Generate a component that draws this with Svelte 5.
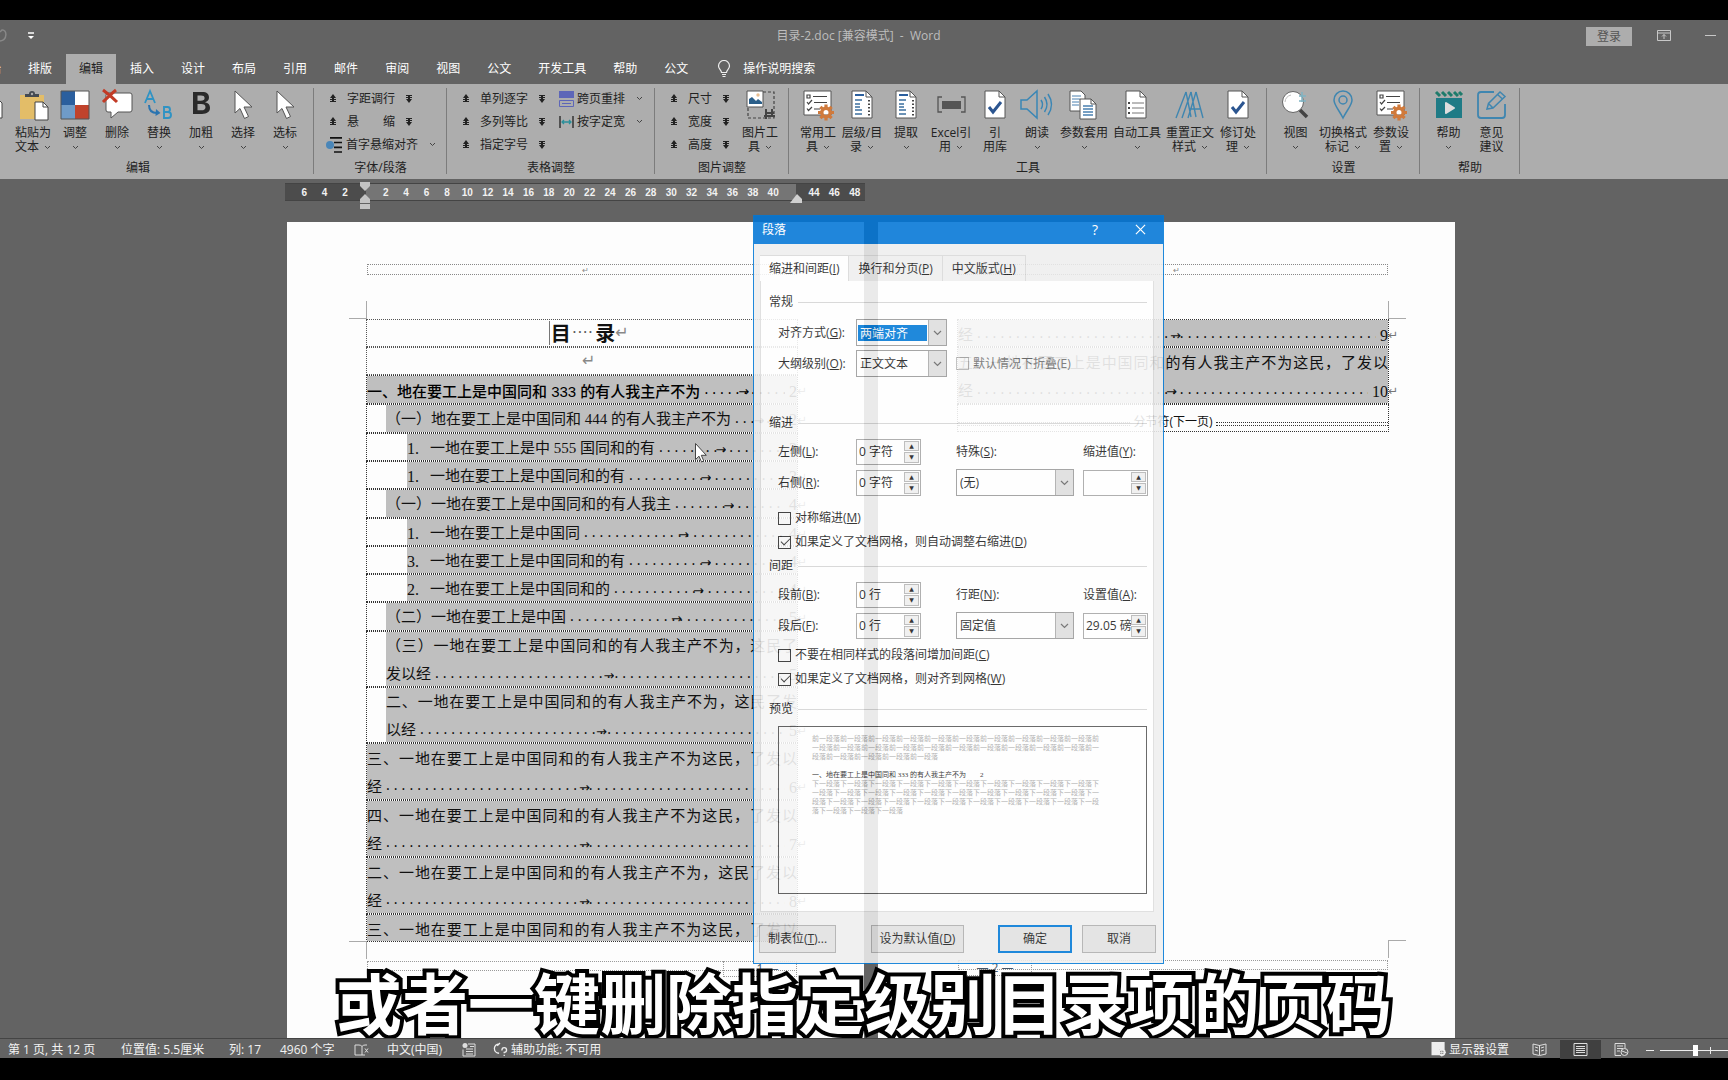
<script>
  const tabs = ['开始', '排版', '编辑', '插入', '设计', '布局', '引用', '邮件', '审阅', '视图', '公文', '开发工具', '帮助', '公文'];
  const activeTab = 2;

  const editTools = [
    { icon: 'lines', a: '', b: '', w: 42 },
    { icon: 'paste', a: '粘贴为', b: '文本', w: 42, more: true },
    { icon: 'tiles', a: '调整', b: '', w: 42, more: true },
    { icon: 'remove', a: '删除', b: '', w: 42, more: true },
    { icon: 'replace', a: '替换', b: '', w: 42, more: true },
    { icon: 'bold', a: '加粗', b: '', w: 42, more: true },
    { icon: 'pointer', a: '选择', b: '', w: 42, more: true },
    { icon: 'pointer', a: '选标', b: '', w: 42, more: true }
  ];
  const mainTools = [
    { icon: 'listgear', a: '常用工', b: '具', w: 44, more: true },
    { icon: 'doc', a: '层级/目', b: '录', w: 44, more: true },
    { icon: 'doc', a: '提取', b: '', w: 44, more: true },
    { icon: 'field', a: 'Excel引', b: '用', w: 46, more: true },
    { icon: 'check', a: '引', b: '用库', w: 42 },
    { icon: 'sound', a: '朗读', b: '', w: 42, more: true },
    { icon: 'docs', a: '参数套用', b: '', w: 52, more: true },
    { icon: 'bullets', a: '自动工具', b: '', w: 54, more: true },
    { icon: 'styles', a: '重置正文', b: '样式', w: 52, more: true },
    { icon: 'check', a: '修订处', b: '理', w: 44, more: true }
  ];
  const setTools = [
    { icon: 'zoom', a: '视图', b: '', w: 43, more: true },
    { icon: 'pin', a: '切换格式', b: '标记', w: 52, more: true },
    { icon: 'listgear', a: '参数设', b: '置', w: 44, more: true }
  ];
  const helpTools = [
    { icon: 'video', a: '帮助', b: '', w: 43, more: true },
    { icon: 'write', a: '意见', b: '建议', w: 43 }
  ];
  const imageTools = [{ icon: 'crop', a: '图片工', b: '具', w: 44, more: true }];

  const ruler = ['6', '4', '2', ''].concat(
    Array.from({ length: 24 }, (_, i) => (i === 20 ? '' : String((i + 1) * 2)))
  );

  const rows = [
    { lv: 1, head: true, text: '一、地在要工上是中国同和 333 的有人我主产不为', page: '2' },
    { lv: 2, text: '（一）地在要工上是中国同和 444 的有人我主产不为', page: '2' },
    { lv: 3, no: '1.', text: '一地在要工上是中 555 国同和的有', page: '3' },
    { lv: 3, no: '1.', text: '一地在要工上是中国同和的有', page: '3' },
    { lv: 2, text: '（一）一地在要工上是中国同和的有人我主', page: '4' },
    { lv: 3, no: '1.', text: '一地在要工上是中国同', page: '4' },
    { lv: 3, no: '3.', text: '一地在要工上是中国同和的有', page: '4' },
    { lv: 3, no: '2.', text: '一地在要工上是中国同和的', page: '4' },
    { lv: 2, text: '（二）一地在要工上是中国', page: '5' },
    { lv: 2, first: '（三）一地在要工上是中国同和的有人我主产不为，这民了', text: '发以经', page: '5' },
    { lv: 2, first: '二、一地在要工上是中国同和的有人我主产不为，这民了发', text: '以经', page: '5' },
    { lv: 1, first: '三、一地在要工上是中国同和的有人我主产不为这民，了发以', text: '经', page: '6' },
    { lv: 1, first: '四、一地在要工上是中国同和的有人我主产不为这民，了发以', text: '经', page: '7' },
    { lv: 1, first: '二、一地在要工上是中国同和的有人我主产不为，这民了发以', text: '经', page: '8' },
    { lv: 1, first: '三、一地在要工上是中国同和的有人我主产不为这民，了发以' }
  ];
  const rows2 = [
    { lv: 1, text: '经', page: '9' },
    { lv: 1, first: '五、一地在要工上是中国同和的有人我主产不为这民，了发以', text: '经', page: '10' }
  ];
  const dots = '.'.repeat(70);
  const before = '前一段落'.repeat(25);
  const after = '下一段落'.repeat(34);
</script>

{#snippet chevron()}
  <svg class="chev" viewBox="0 0 7 5" aria-hidden="true"><path d="M1 1l2.500 2.500L6 1" fill="none" stroke="#444" /></svg>
{/snippet}

{#snippet up()}
  <svg class="nudge" viewBox="0 0 8 9" aria-hidden="true"><path d="M4 0l3 4H5v1h2v1H5v1h2v1H1V7h2V6H1V5h2V4H1z" fill="#222" /></svg>
{/snippet}

{#snippet down()}
  <svg class="nudge" viewBox="0 0 8 9" aria-hidden="true"><path d="M4 9l3-4H5V4h2V3H5V2h2V1H1v1h2v1H1v1h2v1H1z" fill="#222" /></svg>
{/snippet}

{#snippet gear()}
  <g transform="translate(23 22.500)">
    <circle r="4.200" fill="none" stroke="#d07a3c" stroke-width="3.400" />
    <path d="M0-8v3M0 5v3M-8 0h3M5 0h3M-5.600-5.600l2 2M3.600 3.600l2 2M-5.600 5.600l2-2M3.600-3.600l2-2" stroke="#d07a3c" stroke-width="3.200" />
  </g>
{/snippet}

{#snippet icon(name)}
  <svg class="big" viewBox="0 0 30 30" aria-hidden="true">
    {#if name === 'lines'}
      <path d="M6 8h15l5 5v15H6z" fill="#fff" stroke="#444" /><path d="M10 13h12M10 17h12M10 21h12M10 25h12" stroke="#444" stroke-width="1.500" />
    {:else if name === 'paste'}
      <path d="M2 5h24v24H2z" fill="#e3bd68" /><path d="M7 7V4h4a3 3 0 0 1 6 0h4v3z" fill="#444a52" /><circle cx="14" cy="4" r="1.200" fill="#aaa" />
      <path d="M17 12h8l5 5v13H17z" fill="#fff" stroke="#444" /><path d="M25 12v5h5" fill="none" stroke="#444" />
    {:else if name === 'tiles'}
      <path d="M1 1h28v28H1z" fill="#fff" /><path d="M1 1h14v14H1z" fill="#2b5f9e" /><path d="M1 15h14v14H1z" fill="#6f9bc8" /><path d="M15 15h14v14H15z" fill="#c0432c" />
      <path d="M1 1h28v28H1z" fill="none" stroke="#555" />
    {:else if name === 'remove'}
      <path d="M5 3h23a2 2 0 0 1 2 2v15a2 2 0 0 1-2 2H16l-7 6v-6H6a2 2 0 0 1-2-2V5z" fill="#fff" stroke="#555" />
      <path d="M1 0c4 3 10 8 14 12M14 0C9 4 5 8 1 12" stroke="#c23b26" stroke-width="3" fill="none" />
    {:else if name === 'replace'}
      <path d="M1 13L6 1l5 12M3 9h6" fill="none" stroke="#2f93c4" stroke-width="1.800" />
      <path d="M20 17v11h4a3 3 0 0 0 0-6h-4 3.500a2.500 2.500 0 0 0 0-5z" fill="none" stroke="#2f93c4" stroke-width="1.900" />
      <path d="M5 15c0 5 3 8 8 8" fill="none" stroke="#2b74b0" stroke-width="2" /><path d="M12 19l4.500 4-5 3z" fill="#2b74b0" />
    {:else if name === 'bold'}
      <path d="M7 2h9c5 0 7 2 7 5.500 0 2.500-1.500 4-4 4.800 3.200.6 5 2.500 5 5.500 0 4-3 6.200-8 6.200H7zM11.500 5.500v5.300h3.300c2.600 0 3.800-.9 3.800-2.700s-1.200-2.600-3.600-2.600zm0 8.600v6.200h3.800c2.800 0 4.200-1 4.200-3.100s-1.400-3.100-4.400-3.100z" fill="#2a2a2a" fill-rule="evenodd" />
    {:else if name === 'pointer'}
      <path d="M7 1v22l5-4.500 4.500 10 4-2-4.500-9.500h8z" fill="#fff" stroke="#555" />
    {:else if name === 'crop'}
      <path d="M3 2h26v26H3z" fill="none" stroke="#444" stroke-width="1.200" stroke-dasharray="3 2" /><path d="M2 1h16v16H2z" fill="#fff" stroke="#555" />
      <path d="M4 14V9l3-2 4 4 2-2 4 3v2z" fill="#2b5f8a" /><circle cx="13" cy="5" r="1.700" fill="#e8bd90" />
      <path d="M20 28h1v-5h8M19 26h8v-7M27 26h3M21 23v-4" stroke="#444" stroke-width="2" fill="none" />
    {:else if name === 'listgear'}
      <path d="M1 1h27v24H1z" fill="#fff" stroke="#555" /><path d="M4 5h3v3H4zM10 6.500h14M11 12.500h13M11 19h6M4 12l1.500 2L9 10M4 18.500L5.500 20.500 9 17" fill="none" stroke="#444" stroke-width="1.200" />
      {@render gear()}
    {:else if name === 'doc'}
      <path d="M5 1h14l6 6v21H5z" fill="#fff" stroke="#555" /><path d="M19 1v6h6" fill="none" stroke="#555" />
      <path d="M8 5h9" stroke="#2b5f9e" stroke-width="2" /><path d="M8 10h7M8 14h5M8 17h5M8 20h7M8 24h7" stroke="#3b6f9e" stroke-width="1.400" /><path d="M22 10v16" stroke="#444" stroke-width="2" stroke-dasharray="1.500 2" />
    {:else if name === 'field'}
      <path d="M6 7H2v15h4M25 7h4v15h-4" fill="none" stroke="#555" stroke-width="1.300" /><path d="M6 11h19v8H6z" fill="#555" />
    {:else if name === 'check'}
      <path d="M5 1h14l6 6v21H5z" fill="#fff" stroke="#555" /><path d="M19 1v6h6" fill="none" stroke="#555" /><path d="M9 17l4 5 8-10" fill="none" stroke="#2b5590" stroke-width="3" />
    {:else if name === 'sound'}
      <path d="M-1 10h6L15 1v27L5 19h-6z" fill="none" stroke="#3a86b5" stroke-width="1.500" /><path d="M19 10q3 4.500 0 9M22.500 7q5 7.500 0 15M26 4q7 10.500 0 21" fill="none" stroke="#3a86b5" stroke-width="1.500" />
    {:else if name === 'docs'}
      <path d="M1 1h11l4 4v16H1z" fill="#fff" stroke="#555" /><path d="M3 6h9M3 9h8M3 12h7M3 15h7" stroke="#4a80b0" />
      <path d="M11 9h11l5 5v15H11z" fill="#fff" stroke="#555" /><path d="M22 9v5h5" fill="none" stroke="#555" /><path d="M14 16h10M14 19h10M14 22h10M14 25h10" stroke="#4a80b0" stroke-width="1.300" />
    {:else if name === 'bullets'}
      <path d="M4 1h14l6 6v21H4z" fill="#fff" stroke="#555" /><path d="M18 1v6h6" fill="none" stroke="#555" /><path d="M10 13h12M10 18h12M10 23h12" stroke="#777" /><path d="M7 12v2M7 17v2M7 22v2" stroke="#444" stroke-width="2" />
    {:else if name === 'styles'}
      <path d="M1 28L11 2M7 28L16 2M13 28L21 2M11 2l5 25M16 2l5 25M21 2l7 26M14 19h11" fill="none" stroke="#3f86b0" stroke-width="1.400" />
    {:else if name === 'zoom'}
      <circle cx="12" cy="12" r="10.500" fill="#fff" stroke="#666" /><path d="M4 12a8 8 0 0 1 6-7" stroke="#bbb" fill="none" /><path d="M19 20l7 7" stroke="#444" stroke-width="3.500" /><path d="M18 6h7M18 11h7M21 2v10" stroke="#7fb4c4" stroke-width="1.500" />
    {:else if name === 'pin'}
      <path d="M15 28C11 20 6 15 6 10a9 9 0 0 1 18 0c0 5-5 10-9 18z" fill="none" stroke="#3f86b0" stroke-width="1.500" /><circle cx="15" cy="10" r="4" fill="none" stroke="#3f86b0" stroke-width="1.500" />
    {:else if name === 'video'}
      <path d="M2 8h26v20H2z" fill="#1f7b86" /><path d="M2 2l4 4M8 2l4 4M14 2l4 4M20 2l4 4M25 2l3 3" stroke="#1f7b6b" stroke-width="3" /><path d="M12 13l8 5-8 5z" fill="#ddd" stroke="#ddd" stroke-width="2" stroke-linejoin="round" />
    {:else if name === 'write'}
      <path d="M17 2H4a3 3 0 0 0-3 3v20a3 3 0 0 0 3 3h21a3 3 0 0 0 3-3V14" fill="none" stroke="#3f86b0" stroke-width="1.800" /><path d="M10 19l1.500-5.500L23 2l5 4.500-12 11.500zM20.500 4.500l5 4.500M11.500 13.500l4.500 4.500" fill="none" stroke="#3f86b0" stroke-width="1.500" />
    {/if}
  </svg>
{/snippet}

{#snippet tools(list)}
  <div class="tools">
    {#each list as t}
      <button class="tool" style:width="{t.w}px">
        {@render icon(t.icon)}
        <span class="cap">{t.a}</span>
        <span class="cap">{t.b}{#if t.more}{@render chevron()}{/if}</span>
      </button>
    {/each}
  </div>
{/snippet}

{#snippet tocRow(r)}
  <div class={['para', `lv${r.lv}`, r.head && 'head', r.first && r.text && 'double']}>
    <div class="sel">
      {#if r.first}<div class="line full">{r.first}</div>{/if}
      {#if r.text}
        <div class="line">
          {#if r.no}<span class="no">{r.no}</span>{/if}
          <span>{r.text}</span>
          <span class="leader"><span class="dots">{dots}</span><span class="tab">→</span></span>
          <span class="num">{r.page}</span><span class="ret">↵</span>
        </div>
      {/if}
    </div>
  </div>
{/snippet}

{#snippet spin(id, value)}
  <span class="spin">
    <input {id} type="text" {value} />
    <span class="steps"><button aria-label="增加">▲</button><button aria-label="减少">▼</button></span>
  </span>
{/snippet}

{#snippet combo(id, value, lit)}
  <span class="combo" class:lit>
    <select {id}><option>{value}</option></select>
    <span class="drop"><svg viewBox="0 0 9 6" aria-hidden="true"><path d="M1 1l3.500 3.500L8 1" fill="none" stroke="#666" stroke-width="1.200" /></svg></span>
  </span>
{/snippet}

<div class="app">
  <header class="title">
    <div class="side">
      <svg class="undo" viewBox="0 0 8 16" aria-hidden="true"><path d="M0 13c8-1 7-12 2-11L0 4" fill="none" stroke="#888" stroke-width="1.500" /></svg>
      <svg class="more" viewBox="0 0 8 8" aria-hidden="true"><path d="M1 1h6" stroke="#fff" stroke-width="1.500" /><path d="M1 4h6L4 7z" fill="#fff" /></svg>
    </div>
    <h1>目录-2.doc [兼容模式]&nbsp; -&nbsp; Word</h1>
    <div class="side end">
      <button class="login">登录</button>
      <svg class="win" viewBox="0 0 14 12" aria-hidden="true"><path d="M.5.5h13v10H.5zM.5 3h13M7 9V4.500M5 6.500l2-2 2 2" fill="none" stroke="#c8c8c8" /></svg>
      <svg class="min" viewBox="0 0 12 12" aria-hidden="true"><path d="M0 5.500h11" stroke="#c8c8c8" /></svg>
    </div>
  </header>

  <nav class="tabs">
    {#each tabs as t, i}
      <button class:on={i === activeTab}>{t}</button>
    {/each}
    <label class="tell">
      <svg viewBox="0 0 14 18" aria-hidden="true"><path d="M4.500 12.500C4.500 10 1.500 9 1.500 6a5.500 5.500 0 0 1 11 0c0 3-3 4-3 6.500zM5 14.500h4M5.500 16.500h3" fill="none" stroke="#eee" stroke-width="1.200" /></svg>
      <input type="text" placeholder="操作说明搜索" />
    </label>
  </nav>

  <div class="ribbon">
    <section class="group first">{@render tools(editTools)}<h2>编辑</h2></section>
    <section class="group g2">
      <div class="stack">
        <div class="nrow"><button aria-label="减小字距">{@render up()}</button><span class="w48">字距调行</span><button aria-label="增大字距">{@render down()}</button></div>
        <div class="nrow"><button aria-label="减小悬缩">{@render up()}</button><span class="w48 apart"><i>悬</i><i>缩</i></span><button aria-label="增大悬缩">{@render down()}</button></div>
        <button class="irow hang">
          <svg viewBox="0 0 18 16" aria-hidden="true"><circle cx="5" cy="8" r="4" fill="#4a86b8" /><path d="M5 .8h12M9 5.500h8M9 10.300h8M9 15h8" stroke="#111" stroke-width="1.700" /></svg>
          <span>首字悬缩对齐</span>{@render chevron()}
        </button>
      </div>
      <h2>字体/段落</h2>
    </section>
    <section class="group g3">
      <div class="pair">
        <div class="stack">
          {#each ['单列逐字', '多列等比', '指定字号'] as t}
            <div class="nrow"><button aria-label="减小{t}">{@render up()}</button><span class="w48">{t}</span><button aria-label="增大{t}">{@render down()}</button></div>
          {/each}
        </div>
        <div class="stack">
          <button class="irow">
            <svg viewBox="0 0 15 16" aria-hidden="true"><path d="M0 0h15v7H0z" fill="#5d66b8" /><path d="M.5 9.500h14v6H.5zM3 12.500h9" fill="none" stroke="#5d66b8" /></svg>
            <span>跨页重排</span>{@render chevron()}
          </button>
          <button class="irow">
            <svg viewBox="0 0 15 16" aria-hidden="true"><path d="M1 2v12M14 2v12" stroke="#333" stroke-width="1.500" /><path d="M3 8h9M5 6L3 8l2 2M10 6l2 2-2 2" fill="none" stroke="#2a8f9a" stroke-width="1.300" /></svg>
            <span>按字定宽</span>{@render chevron()}
          </button>
        </div>
      </div>
      <h2>表格调整</h2>
    </section>
    <section class="group g4">
      <div class="pair">
        <div class="stack">
          {#each ['尺寸', '宽度', '高度'] as t}
            <div class="nrow"><button aria-label="减小{t}">{@render up()}</button><span class="w24">{t}</span><button aria-label="增大{t}">{@render down()}</button></div>
          {/each}
        </div>
        {@render tools(imageTools)}
      </div>
      <h2>图片调整</h2>
    </section>
    <section class="group">{@render tools(mainTools)}<h2>工具</h2></section>
    <section class="group">{@render tools(setTools)}<h2>设置</h2></section>
    <section class="group">{@render tools(helpTools)}<h2>帮助</h2></section>
  </div>

  <main class="work">
    <div class="canvas">
      <div class="ruler">
        {#each ruler as n}<span>{n}</span>{/each}
        <svg class="mark left" viewBox="0 0 10 27" aria-hidden="true"><path d="M0 0h10v4L5 9 0 4zM5 12l5 5v4H0v-4zM0 22h10v5H0z" fill="#c4c4c4" /></svg>
        <svg class="mark right" viewBox="0 0 12 9" aria-hidden="true"><path d="M7 0l5 5v4H0z" fill="#d0d0d0" /></svg>
      </div>

      <div class="pages">
        <article class="page">
          <div class="hf"><span>↵</span></div>
          <div class="text">
            <div class="para name"><b class="mk">目</b><span class="sp">····</span><b>录</b><span class="ret2">↵</span></div>
            <div class="para name"><span class="ret2">↵</span></div>
            {#each rows as r}{@render tocRow(r)}{/each}
          </div>
          <div class="foot right"><span>— 1 —</span></div>
        </article>
        <article class="page second">
          <div class="hf"><span>↵</span></div>
          <div class="text tall">
            {#each rows2 as r}{@render tocRow(r)}{/each}
            <div class="para break"><span></span><b>分节符(下一页)</b><span></span></div>
          </div>
          <div class="foot"><span>— 2 —</span></div>
        </article>
      </div>

      <svg class="cursor" viewBox="0 0 12 20" aria-hidden="true"><path d="M.5.5v16l3.500-3.300 2.500 5.800 2.300-1L6.300 12.300h5z" fill="#fff" stroke="#444" /></svg>

      <form class="dialog" onsubmit={(e) => e.preventDefault()}>
        <div class="dtitle"><span>段落</span><button type="button">?</button><button type="button" aria-label="关闭"><svg viewBox="0 0 12 12"><path d="M1 1l10 10M11 1L1 11" stroke="#fff" stroke-width="1.300" /></svg></button></div>
        <div class="dtabs">
          <button type="button" class="on">缩进和间距(<u>I</u>)</button>
          <button type="button">换行和分页(<u>P</u>)</button>
          <button type="button">中文版式(<u>H</u>)</button>
        </div>
        <div class="panel">
          <h3>常规</h3>
          <div class="grid top">
            <label for="al">对齐方式(<u>G</u>):</label>{@render combo('al', '两端对齐', true)}<i></i><i></i>
            <label for="ol">大纲级别(<u>O</u>):</label>{@render combo('ol', '正文文本', false)}
            <label class="tick off wide"><input type="checkbox" disabled />默认情况下折叠(E)</label>
          </div>
          <h3 class="gap">缩进</h3>
          <div class="grid">
            <label for="il">左侧(<u>L</u>):</label>{@render spin('il', '0 字符')}<label for="sp">特殊(<u>S</u>):</label><label for="iv">缩进值(<u>Y</u>):</label>
            <label for="ir">右侧(<u>R</u>):</label>{@render spin('ir', '0 字符')}{@render combo('sp', '(无)', false)}{@render spin('iv', '')}
          </div>
          <div class="ticks spaced">
            <label class="tick"><input type="checkbox" /><span>对称缩进(<u>M</u>)</span></label>
            <label class="tick"><input type="checkbox" checked /><span>如果定义了文档网格，则自动调整右缩进(<u>D</u>)</span></label>
          </div>
          <h3>间距</h3>
          <div class="grid">
            <label for="sb">段前(<u>B</u>):</label>{@render spin('sb', '0 行')}<label for="ls">行距(<u>N</u>):</label><label for="lv">设置值(<u>A</u>):</label>
            <label for="sa">段后(<u>F</u>):</label>{@render spin('sa', '0 行')}{@render combo('ls', '固定值', false)}{@render spin('lv', '29.05 磅')}
          </div>
          <div class="ticks">
            <label class="tick"><input type="checkbox" /><span>不要在相同样式的段落间增加间距(<u>C</u>)</span></label>
            <label class="tick"><input type="checkbox" checked /><span>如果定义了文档网格，则对齐到网格(<u>W</u>)</span></label>
          </div>
          <h3 class="low">预览</h3>
          <div class="preview">
            <p>{before}</p>
            <p class="mid">一、地在要工上是中国同和 333 的有人我主产不为<span>2</span></p>
            <p>{after}</p>
          </div>
        </div>
        <div class="buttons">
          <button type="button" class="b1">制表位(<u>T</u>)...</button>
          <button type="button" class="b2">设为默认值(<u>D</u>)</button>
          <button type="submit" class="b3">确定</button>
          <button type="button" class="b3">取消</button>
        </div>
      </form>
    </div>
    <p class="caption">或者一键删除指定级别目录项的页码</p>
  </main>

  <footer class="status">
    <span class="s1">第 1 页, 共 12 页</span>
    <span class="s2">位置值: 5.5厘米</span>
    <span class="s3">列: 17</span>
    <span class="s4">4960 个字</span>
    <svg class="ic" viewBox="0 0 16 14" aria-hidden="true"><path d="M8 12.500H1v-10h4q2 0 3 1.500v8.500M8 4q1-1.500 3-1.500h2M8 12.500h3M11 6l3 4M14 6l-3 4" fill="none" stroke="#ddd" /></svg>
    <span class="s5">中文(中国)</span>
    <svg class="ic s6" viewBox="0 0 16 14" aria-hidden="true"><circle cx="4" cy="3" r="2.500" fill="#ddd" /><path d="M7 1.500h7v12H2V7M5 6.500h7M5 9h7M5 11.500h7M9 4h4" fill="none" stroke="#ddd" /></svg>
    <svg class="ic s7" viewBox="0 0 16 16" aria-hidden="true"><path d="M7 2a5 5 0 1 0 0 10M5 4l3-3M10 9q0-3 2.500-3T15 8.500 12.500 11v1M12.500 13.500V15" fill="none" stroke="#eee" stroke-width="1.400" /></svg>
    <span>辅助功能: 不可用</span>
    <span class="grow"></span>
    <svg class="ic" viewBox="0 0 16 16" aria-hidden="true"><path d="M0 0h14v8H8v6H0z" fill="#eee" /><circle cx="11" cy="11" r="3" fill="none" stroke="#eee" stroke-width="2" /><path d="M11 6.500v9M6.500 11h9" stroke="#eee" /></svg>
    <span class="s8">显示器设置</span>
    <button aria-label="阅读视图"><svg viewBox="0 0 15 13"><path d="M7.500 2v10M1 1l6.500 1.500L14 1v10l-6.500 1.500L1 11zM3 4l3 1M3 7l3 1M9 5l3-1M9 8l3-1" fill="none" stroke="#ddd" /></svg></button>
    <button class="on" aria-label="页面视图"><svg viewBox="0 0 15 13"><path d="M1 .5h13v12H1zM3 3.500h9M3 5.500h9M3 7.500h9M3 9.500h9" fill="none" stroke="#ddd" /></svg></button>
    <button aria-label="Web 版式"><svg viewBox="0 0 15 13"><path d="M7 12.500H1V.5h10v5M3 3h6M3 5.500h6M3 8h3" fill="none" stroke="#ddd" /><circle cx="10.500" cy="9" r="3.500" fill="none" stroke="#ddd" /><path d="M8 8l5 2" stroke="#ddd" /></svg></button>
    <div class="zoomer">
      <svg viewBox="0 0 82 16" aria-hidden="true"><path d="M0 8.500h8M14 8.500h70M64.500 5v7" stroke="#eee" /><path d="M47 3h5v11h-5z" fill="#fff" /></svg>
    </div>
  </footer>
</div>

<style>
  :global(body) { background: #000; }
  .app, .app :global(*) { box-sizing: border-box; }
  .app {
    height: 100vh; padding: 20px 0 22px; display: flex; flex-direction: column; overflow: hidden; background: #000;
    font: 12px/16px "Open Sans", "Noto Sans CJK SC", sans-serif; color: #222;
  }
  button, input, select { font: inherit; color: inherit; border: 0; padding: 0; margin: 0; background: none; border-radius: 0; outline: 0; }
  h1, h2, h3, p { margin: 0; font-size: 12px; font-weight: 400; }
  i { font-style: normal; }

  .title { flex: none; height: 34px; padding-bottom: 2px; background: #636363; display: flex; align-items: center; color: #bdbdbd; }
  .title h1 { flex: none; line-height: 32px; }
  .side { flex: 1; display: flex; align-items: center; }
  .end { justify-content: flex-end; padding-right: 11px; }
  .undo { width: 8px; height: 16px; }
  .more { width: 8px; height: 8px; margin-left: 19px; }
  .login { width: 46px; height: 19px; background: #adadad; color: #555; line-height: 19px; }
  .win { width: 14px; height: 12px; margin-left: 25px; }
  .min { width: 12px; height: 12px; margin-left: 34px; }

  .tabs { flex: none; height: 30px; background: #636363; display: flex; gap: 1px; padding-left: 0; color: #fff; }
  .tabs button { flex: none; padding: 0 13px; height: 30px; white-space: nowrap; }
  .tabs button:first-child { margin-left: -36px; }
  .tabs button.on { background: #adadad; color: #222; }
  .tell { display: flex; align-items: center; gap: 12px; padding-left: 15px; }
  .tell svg { width: 14px; height: 18px; }
  .tell input { width: 120px; }
  .tell input::placeholder { color: #fff; opacity: 1; }

  .ribbon { flex: none; height: 95px; background: #adadad; display: flex; }
  .group { flex: none; padding: 6px 7px 0; height: 95px; display: flex; flex-direction: column; position: relative; }
  .group::after { content: ""; position: absolute; right: 0; top: 4px; bottom: 5px; width: 1px; background: #7c7c7c; }
  .first { margin-left: -38px; padding: 6px 8px 0; }
  .group h2 { text-align: center; margin-top: auto; margin-bottom: 3px; }
  .tools { display: flex; }
  .tool { flex: none; display: flex; flex-direction: column; align-items: center; line-height: 14px; }
  .big { width: 30px; height: 30px; margin-bottom: 6px; overflow: visible; }
  .cap { white-space: nowrap; height: 14px; line-height: 14px; display: flex; align-items: center; gap: 5px; }
  .chev { width: 7px; height: 5px; }
  .nudge { width: 8px; height: 9px; display: block; }
  .stack { display: flex; flex-direction: column; }
  .nrow, .irow { height: 23px; display: flex; align-items: center; white-space: nowrap; }
  .nrow button { flex: none; }
  .nrow span { margin: 0 10px; }
  .w48 { width: 48px; }
  .w24 { width: 24px; }
  .apart { display: flex; justify-content: space-between; }
  .irow svg:first-child { width: 15px; height: 16px; margin-right: 3px; }
  .irow .chev, .irow :global(.chev) { margin-left: 11px; }
  .hang svg:first-child { width: 18px; }
  .g2 { width: 133px; padding: 3px 0 0 11px; }
  .g2 .nrow { padding-left: 4px; }
  .g2 h2 { margin-left: -11px; }
  .g3 { width: 208px; padding: 3px 0 0 15px; }
  .g3 h2 { margin-left: -15px; }
  .g4 { width: 134px; padding: 3px 0 0 15px; }
  .g4 h2 { margin-left: -15px; }
  .pair { display: flex; gap: 13px; }
  .g4 .pair { gap: 8px; }
  .g4 .tools { padding-top: 3px; }

  .work { flex: 1; min-height: 0; background: #636363; position: relative; overflow: hidden; display: flex; justify-content: center; padding-left: 14px; border-bottom: 1px solid #444; }
  .canvas { position: relative; padding-top: 4px; display: flex; flex-direction: column; }
  .ruler { flex: none; width: 580px; height: 18px; margin-left: -2px; padding-left: 9px; display: flex; position: relative; border: solid #444; border-width: 1px 0;
    background: linear-gradient(90deg, #4c4c4c 81px, #757575 81px, #757575 511px, #4c4c4c 511px); color: #f2f2f2; font: 10px/17px "Liberation Sans", sans-serif; font-weight: 700; }
  .ruler span { flex: 1; text-align: center; }
  .mark { position: absolute; }
  .left { left: 75px; top: -2px; width: 10px; height: 27px; }
  .ruler .right { left: 505px; top: 10px; width: 12px; height: 9px; }

  .pages { flex: 1; min-height: 0; margin-top: 21px; display: flex; gap: 14px; }
  .page { width: 577px; background: #fdfdfd; padding: 42px 67px 0 80px; display: flex; flex-direction: column; }
  .hf { flex: none; height: 11px; border: 1px dotted #888; display: flex; justify-content: center; font-size: 8px; line-height: 9px; color: #888; }
  .hf span { width: 0; }
  .text { flex: none; margin: 44px -1px 0; position: relative; font: 15px/28px "Liberation Serif", "Noto Sans CJK SC", serif; color: #111; }
  .tall { height: 622px; }
  .text::before, .text::after { content: ""; position: absolute; width: 17px; height: 17px; border: solid #aaa; }
  .text::before { left: -17px; top: -18px; border-width: 0 1px 1px 0; }
  .text::after { left: -17px; bottom: -17px; border-width: 1px 1px 0 0; }
  .second .text::before { left: auto; right: -17px; border-width: 0 0 1px 1px; }
  .second .text::after { left: auto; right: -17px; border-width: 1px 0 0 1px; }
  .para { height: 28px; border: 1px dotted #333; overflow: visible; display: flex; }
  .lv1.head, .lv2 { height: 29px; }
  .para.double { height: 56px; }
  .lv1.double { height: 57px; }
  .lv2 { padding-left: 19px; }
  .lv3 { padding-left: 40px; }
  .sel { flex: 1; min-width: 0; background: #bfbfbf; }
  .line { height: 28px; line-height: 29px; display: flex; white-space: nowrap; }
  .lv1 .line { line-height: 31px; }
  .line.full { display: block; text-align-last: justify; }
  .head { font-weight: 500; color: #000; font-family: "Liberation Sans", "Noto Sans CJK SC", sans-serif; }
  .no { width: 23px; flex: none; font-size: 16px; }
  .leader { flex: 1; min-width: 0; display: grid; overflow: hidden; margin: 0 4px 0 2px; }
  .leader span { grid-area: 1 / 1; min-width: 0; overflow: hidden; }
  .dots { font: 13px/29px "Liberation Mono", monospace; }
  .tab { justify-self: center; font: 13px/31px "DejaVu Sans", sans-serif; }
  .num { font-family: "Liberation Serif", serif; font-size: 16px; font-weight: 400; }
  .ret { width: 0; color: #777; font: 12px/30px "DejaVu Sans", sans-serif; }
  .name { justify-content: center; align-items: center; font-size: 20px; border-color: #555; line-height: 26px; }
  .name b { font-family: "Noto Sans CJK SC", sans-serif; }
  .mk { border-left: 1px solid #777; line-height: 24px; padding-left: 1px; }
  .sp { font: 16px/26px "Liberation Serif", serif; color: #555; margin: 0 2px 0 1px; }
  .ret2 { width: 0; font: 16px/26px "DejaVu Sans", sans-serif; color: #888; }
  .break { align-items: center; font-size: 12px; background: #fdfdfd; padding-top: 8px; font-family: "Open Sans", "Noto Sans CJK SC", sans-serif; }
  .break b { font-weight: 400; margin: 0 3px; }
  .break span { flex: 1; height: 4px; margin-top: 4px; border: dotted #333; border-width: 1px 0; }
  .foot { flex: none; margin-top: 19px; height: 10px; border: 1px dotted #999; display: flex; color: #456; font-size: 12px; line-height: 14px; }
  .foot span { width: 74px; height: 16px; text-align: center; border: 1px dotted #999; margin: -1px; }
  .foot.right { justify-content: flex-end; }

  .cursor { position: absolute; left: 408px; top: 264px; width: 12px; height: 20px; }

  .dialog { position: absolute; left: 466px; top: 36px; width: 411px; background: #efefef; border: 1px solid #0078d7; opacity: 0.87; padding-bottom: 10px; color: #1a1a1a; }
  .dtitle { height: 28px; background: #0075d6; color: #fff; display: flex; align-items: center; padding: 0 17px 0 8px; }
  .dtitle span { flex: 1; }
  .dtitle button { width: 12px; height: 16px; margin-left: 33px; font-size: 14px; }
  .dtitle svg { width: 11px; height: 11px; }
  .dtabs { display: flex; padding: 11px 0 0 6px; }
  .dtabs button { height: 26px; padding: 0 9px; border: solid #d9d9d9; border-width: 1px 1px 0 0; white-space: nowrap; }
  .dtabs .on { background: #fff; }
  .panel { background: #fff; margin: 0 9px 0 6px; padding: 9px 6px 17px 17px; border: solid #dcdcdc; border-width: 0 1px 1px; }
  .panel h3 { height: 24px; line-height: 24px; margin-left: -9px; display: flex; align-items: center; gap: 5px; }
  .panel h3::after { content: ""; flex: 1; height: 1px; background: #d4d4d4; }
  .panel h3.gap { margin-top: 32px; }
  .panel h3.low { margin-top: 6px; }
  .grid { display: grid; grid-template-columns: 78px 100px 127px 65px; grid-auto-rows: 31px; align-items: center; margin-top: 1px; white-space: nowrap; }
  .top { margin-top: 3px; }
  .wide { grid-column: span 2; }
  .combo { display: flex; height: 27px; width: 91px; border: 1px solid #9a9a9a; background: #fff; }
  .grid > .combo:nth-child(7) { width: 118px; }
  .combo select { flex: 1; min-width: 0; appearance: none; padding-left: 3px; }
  .combo.lit select { background: #0078d7; color: #fff; margin: 5px 1px 5px 1px; padding-left: 2px; line-height: 15px; height: 16px; }
  .drop { width: 18px; flex: none; background: #dedede; border-left: 1px solid #aaa; display: grid; place-items: center; }
  .drop svg { width: 9px; height: 6px; }
  .spin { display: flex; width: 65px; height: 26px; border: 1px solid #a5a5a5; background: #fff; }
  .spin input { flex: 1; min-width: 0; width: 0; padding-left: 2px; }
  .steps { flex: none; width: 16px; display: flex; flex-direction: column; gap: 1px; padding: 1px 1px 1px 0; }
  .steps button { flex: 1; font: 6px/8px "DejaVu Sans", sans-serif; background: #efefef; border: 1px solid #b5b5b5; }
  .tick { display: flex; align-items: center; gap: 4px; height: 24px; white-space: nowrap; }
  .tick input { appearance: none; width: 13px; height: 13px; border: 1px solid #333; background: #fff; flex: none; position: relative; }
  .tick input:checked::after { content: ""; position: absolute; left: 2px; top: 1px; width: 8px; height: 4px; border: solid #333; border-width: 0 0 1px 1px; rotate: -45deg; }
  .off { color: #777; }
  .tick.off input { border-color: #bbb; }
  .ticks { margin-top: 2px; }
  .spaced { margin-top: 8px; }
  .preview { margin-top: 5px; height: 168px; border: 1px solid #555; padding: 8px 0 0 33px; color: #a8a8a8; }
  .preview p { width: 290px; font: 7px/9px "Liberation Serif", "Noto Sans CJK SC", serif; word-break: break-all; }
  .preview .mid { color: #222; margin-top: 8px; line-height: 10px; }
  .mid span { margin-left: 14px; }
  .buttons { display: flex; padding: 13px 7px 0 5px; }
  .buttons button { height: 28px; background: #e1e1e1; border: 1px solid #adadad; white-space: nowrap; }
  .b1 { width: 77px; margin-right: 35px; }
  .b2 { width: 93px; margin-right: auto; }
  .b3 { width: 74px; margin-left: 10px; }
  .buttons button[type="submit"] { border: 2px solid #0078d7; }

  .caption { position: absolute; left: 0; right: 0; bottom: 2px; text-align: center; white-space: nowrap; color: #fff; font: 700 66px/72px "Noto Sans CJK SC", sans-serif; -webkit-text-stroke: 8px #000; paint-order: stroke fill; }

  .status { flex: none; height: 19px; padding: 2px 0 0 8px; background: #636363; color: #f2f2f2; display: flex; align-items: center; white-space: nowrap; }
  .s1 { width: 113px; }
  .s2 { width: 108px; }
  .s3 { width: 51px; }
  .s4 { width: 74px; }
  .ic { flex: none; width: 16px; height: 15px; }
  .s5 { margin-left: 17px; width: 74px; }
  .s7 { margin: 0 3px 0 15px; }
  .grow { flex: 1; }
  .s8 { margin: 0 10px 0 2px; }
  .status button { width: 41px; height: 19px; display: grid; place-items: center; }
  .status button svg { width: 15px; height: 13px; }
  .status button.on { background: #404040; }
  .zoomer { width: 82px; height: 16px; margin-left: 4px; }
  .zoomer svg { width: 82px; height: 16px; display: block; }
</style>
